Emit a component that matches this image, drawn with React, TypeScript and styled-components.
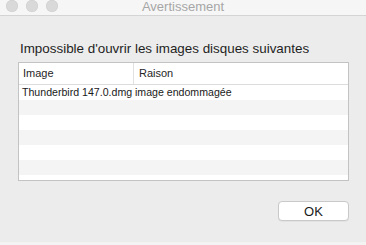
import styled, { createGlobalStyle } from "styled-components";

const Global = createGlobalStyle`
  html, body {
    margin: 0;
    padding: 0;
    background: #f3f3f3;
  }
  body {
    font-family: "Liberation Sans", Arial, sans-serif;
    color: #222;
  }
`

type Row = { image: string; reason: string }

const rows: Row[] = [
  { image: "Thunderbird 147.0.dmg", reason: "image endommagée" },
  { image: "", reason: "" },
  { image: "", reason: "" },
  { image: "", reason: "" },
  { image: "", reason: "" },
  { image: "", reason: "" },
  { image: "", reason: "" },
]

export default function App() {
  return (
    <>
      <Global />
      <Window>
        <TitleBar>
          <Lights>
            <Light />
            <Light />
            <Light />
          </Lights>
          <Title>Avertissement</Title>
          <span />
        </TitleBar>

        <Content>
          <Heading>Impossible d'ouvrir les images disques suivantes</Heading>

          <Table>
            <HeadRow>
              <HeadCell>Image</HeadCell>
              <HeadCell $divider>Raison</HeadCell>
            </HeadRow>
            {rows.map((r, i) => (
              <BodyRow key={i} $odd={i % 2 === 1}>
                <Cell>{r.image}</Cell>
                <Cell $second>{r.reason}</Cell>
              </BodyRow>
            ))}
          </Table>

          <Footer>
            <Button>OK</Button>
          </Footer>
        </Content>
      </Window>
    </>
  )
}

const Window = styled.div`
  display: flex;
  flex-direction: column;
  width: 366px;
  height: 242px;
  background: #ececec;
  box-shadow: 0 1px 0 #bdbdbd, 0 2px 2px rgba(0, 0, 0, 0.06);
  overflow: hidden;
`

const TitleBar = styled.div`
  display: grid;
  grid-template-columns: 1fr auto 1fr;
  align-items: start;
  height: 15px;
  flex-shrink: 0;
  background: #f6f6f6;
  border-bottom: 1px solid #d4d4d4;
`

const Lights = styled.div`
  display: flex;
  gap: 8px;
  padding-left: 6px;
`

const Light = styled.div`
  width: 12px;
  height: 12px;
  border-radius: 50%;
  background: #d9d9d9;
  box-shadow: inset 0 0 0 0.5px #cdcdcd;
`

const Title = styled.div`
  font-size: 13px;
  line-height: 13px;
  color: #a6a6a6;
`

const Content = styled.div`
  display: flex;
  flex-direction: column;
  padding: 25px 17px 0 18px;
`

const Heading = styled.div`
  font-size: 13.4px;
  line-height: 15px;
  color: #1e1e1e;
  padding-left: 2px;
  margin-bottom: 6px;
`

const Table = styled.div`
  display: flex;
  flex-direction: column;
  height: 117px;
  border: 1px solid #c3c3c3;
  background: #ffffff;
  overflow: hidden;
`

const HeadRow = styled.div`
  display: grid;
  grid-template-columns: 114px 1fr;
  height: 21px;
  flex-shrink: 0;
  border-bottom: 1px solid #dcdcdc;
`

const HeadCell = styled.div<{ $divider?: boolean }>`
  font-size: 11px;
  line-height: 20px;
  padding-left: ${p => (p.$divider ? "5px" : "4px")};
  color: #262626;
  border-left: ${p => (p.$divider ? "1px solid #e2e2e2" : "none")};
`

const BodyRow = styled.div<{ $odd: boolean }>`
  display: grid;
  grid-template-columns: 114px 1fr;
  height: 15px;
  flex-shrink: 0;
  background: ${p => (p.$odd ? "#f4f4f4" : "#ffffff")};
`

const Cell = styled.div<{ $second?: boolean }>`
  font-size: 10.6px;
  line-height: 15px;
  padding-left: ${p => (p.$second ? "2px" : "3px")};
  color: #1a1a1a;
  white-space: nowrap;
  overflow: hidden;
`

const Footer = styled.div`
  display: flex;
  justify-content: flex-end;
  margin-top: 20px;
`

const Button = styled.div`
  display: flex;
  justify-content: center;
  align-items: center;
  width: 69px;
  height: 18px;
  background: #ffffff;
  border: 1px solid #c9c9c9;
  border-radius: 4px;
  font-size: 13px;
  color: #1a1a1a;
  box-shadow: 0 0.5px 0 rgba(0, 0, 0, 0.08);
`
